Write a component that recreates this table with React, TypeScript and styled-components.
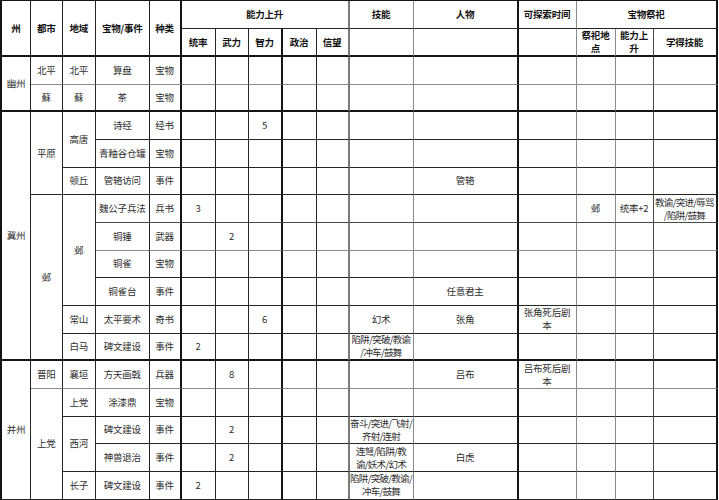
import React from 'react';
import styled, { createGlobalStyle } from 'styled-components';

const Global = createGlobalStyle`
  html, body { margin: 0; padding: 0; background: #ffffff; }
  body { font-family: "Noto Sans CJK SC", "Noto Sans", sans-serif; color: #1c1c1c; }
`;

type Line = { w: number; c: string };
const DK: Line = { w: 1, c: '#262626' };
const BK: Line = { w: 2, c: '#141414' };
const GR: Line = { w: 1, c: '#8a8a8a' };
const GR2: Line = { w: 2, c: '#7a7a7a' };
const MD: Line = { w: 1, c: '#4a4a4a' };

const colWidths = [29, 31.5, 33.5, 53.5, 32, 34, 33, 34, 34, 33, 64, 105, 58, 39, 38, 64];
const colLines: Line[] = [DK, DK, DK, DK, BK, DK, DK, BK, DK, GR2, GR, BK, GR, GR, MD, BK];
const rowHeights = [28, 28, ...Array(17).fill(27.67)];
const rowLines: Line[] = [
  DK, BK, // header
  GR, BK, DK, DK, DK, MD, GR, DK, DK, DK, BK, GR, DK, DK, DK, DK, DK,
];

type Spec = { t?: string; rs?: number; cs?: number };
type Row = { head?: boolean; cells: (Spec | string)[] };

const rows: Row[] = [
  {
    head: true,
    cells: [
      { t: '州', rs: 2 }, { t: '都市', rs: 2 }, { t: '地域', rs: 2 }, { t: '宝物/事件', rs: 2 }, { t: '种类', rs: 2 },
      { t: '能力上升', cs: 5 }, '技能', '人物', '可探索时间', { t: '宝物祭祀', cs: 3 },
    ],
  },
  {
    head: true,
    cells: ['统率', '武力', '智力', '政治', '信望', '', '', '', '祭祀地\n点', '能力上\n升', '学得技能'],
  },
  { cells: [{ t: '幽州', rs: 2 }, '北平', '北平', '算盘', '宝物'] },
  { cells: ['蘇', '蘇', '茶', '宝物'] },
  { cells: [{ t: '冀州', rs: 9 }, { t: '平原', rs: 3 }, { t: '高唐', rs: 2 }, '诗经', '经书', '', '', '5'] },
  { cells: ['青釉谷仓罐', '宝物'] },
  { cells: ['顿丘', '管辂访问', '事件', '', '', '', '', '', '', '管辂'] },
  { cells: [{ t: '邺', rs: 6 }, { t: '邺', rs: 4 }, '魏公子兵法', '兵书', '3', '', '', '', '', '', '', '', '邺', '统率+2', '教谕/突进/辱骂\n/陷阱/鼓舞'] },
  { cells: ['铜锤', '武器', '', '2'] },
  { cells: ['铜雀', '宝物'] },
  { cells: ['铜雀台', '事件', '', '', '', '', '', '', '任意君主'] },
  { cells: ['常山', '太平要术', '奇书', '', '', '6', '', '', '幻术', '张角', '张角死后剧\n本'] },
  { cells: ['白马', '碑文建设', '事件', '2', '', '', '', '', '陷阱/突破/教谕\n/冲车/鼓舞'] },
  { cells: [{ t: '并州', rs: 5 }, '晋阳', '襄垣', '方天画戟', '兵器', '', '8', '', '', '', '', '吕布', '吕布死后剧\n本'] },
  { cells: [{ t: '上党', rs: 4 }, '上党', '涂漆鼎', '宝物'] },
  { cells: [{ t: '西河', rs: 2 }, '碑文建设', '事件', '', '2', '', '', '', '奋斗/突进/飞射/\n齐射/连射'] },
  { cells: ['神兽退治', '事件', '', '2', '', '', '', '连弩/陷阱/教\n谕/妖术/幻术', '白虎'] },
  { cells: ['长子', '碑文建设', '事件', '2', '', '', '', '', '陷阱/突破/教谕/\n冲车/鼓舞'] },
  { cells: [] },
];

type Placed = { key: string; t: string; r: number; c: number; rs: number; cs: number; head: boolean };

function layout(): Placed[] {
  const nCols = colWidths.length;
  const occ: boolean[][] = rows.map(() => Array(nCols).fill(false));
  const out: Placed[] = [];
  rows.forEach((row, r) => {
    let c = 0;
    const place = (s: Spec) => {
      while (c < nCols && occ[r][c]) c++;
      if (c >= nCols) return;
      const rs = s.rs ?? 1;
      const cs = s.cs ?? 1;
      for (let i = r; i < Math.min(rows.length, r + rs); i++)
        for (let j = c; j < c + cs; j++) occ[i][j] = true;
      out.push({ key: `${r}-${c}`, t: s.t ?? '', r, c, rs, cs, head: !!row.head });
      c += cs;
    };
    row.cells.forEach((s) => place(typeof s === 'string' ? { t: s } : s));
    while (true) {
      while (c < nCols && occ[r][c]) c++;
      if (c >= nCols) break;
      place({ t: '' });
    }
  });
  return out;
}

const Sheet = styled.div`
  display: grid;
  grid-template-columns: ${colWidths.map((w) => `${w}px`).join(' ')};
  grid-template-rows: ${rowHeights.map((h) => `${h}px`).join(' ')};
  width: max-content;
  border-top: 1px solid #141414;
  border-left: 2px solid #141414;
`;

const Cell = styled.div<{
  $r: number; $c: number; $rs: number; $cs: number;
  $right: Line; $bottom: Line; $head: boolean;
}>`
  grid-row: ${(p) => p.$r + 1} / span ${(p) => p.$rs};
  grid-column: ${(p) => p.$c + 1} / span ${(p) => p.$cs};
  box-sizing: border-box;
  border-right: ${(p) => p.$right.w}px solid ${(p) => p.$right.c};
  border-bottom: ${(p) => p.$bottom.w}px solid ${(p) => p.$bottom.c};
  display: flex;
  align-items: center;
  justify-content: center;
  text-align: center;
  white-space: pre;
  font-size: 9.5px;
  line-height: 13px;
  font-weight: ${(p) => (p.$head ? 700 : 400)};
  color: ${(p) => (p.$head ? '#111' : '#2e2e2e')};
  min-width: 0;
`;

const Text = styled.span<{ $tight: boolean }>`
  display: block;
  letter-spacing: ${(p) => (p.$tight ? '-0.7px' : '-0.2px')};
`;

export default function App() {
  const cells = layout();
  return (
    <>
      <Global />
      <Sheet>
        {cells.map((p) => (
          <Cell
            key={p.key}
            $r={p.r}
            $c={p.c}
            $rs={p.rs}
            $cs={p.cs}
            $right={colLines[p.c + p.cs - 1]}
            $bottom={rowLines[Math.min(rowLines.length - 1, p.r + p.rs - 1)]}
            $head={p.head}
          >
            {p.t && <Text $tight={!p.head && p.t.includes('/')}>{p.t}</Text>}
          </Cell>
        ))}
      </Sheet>
    </>
  );
}
